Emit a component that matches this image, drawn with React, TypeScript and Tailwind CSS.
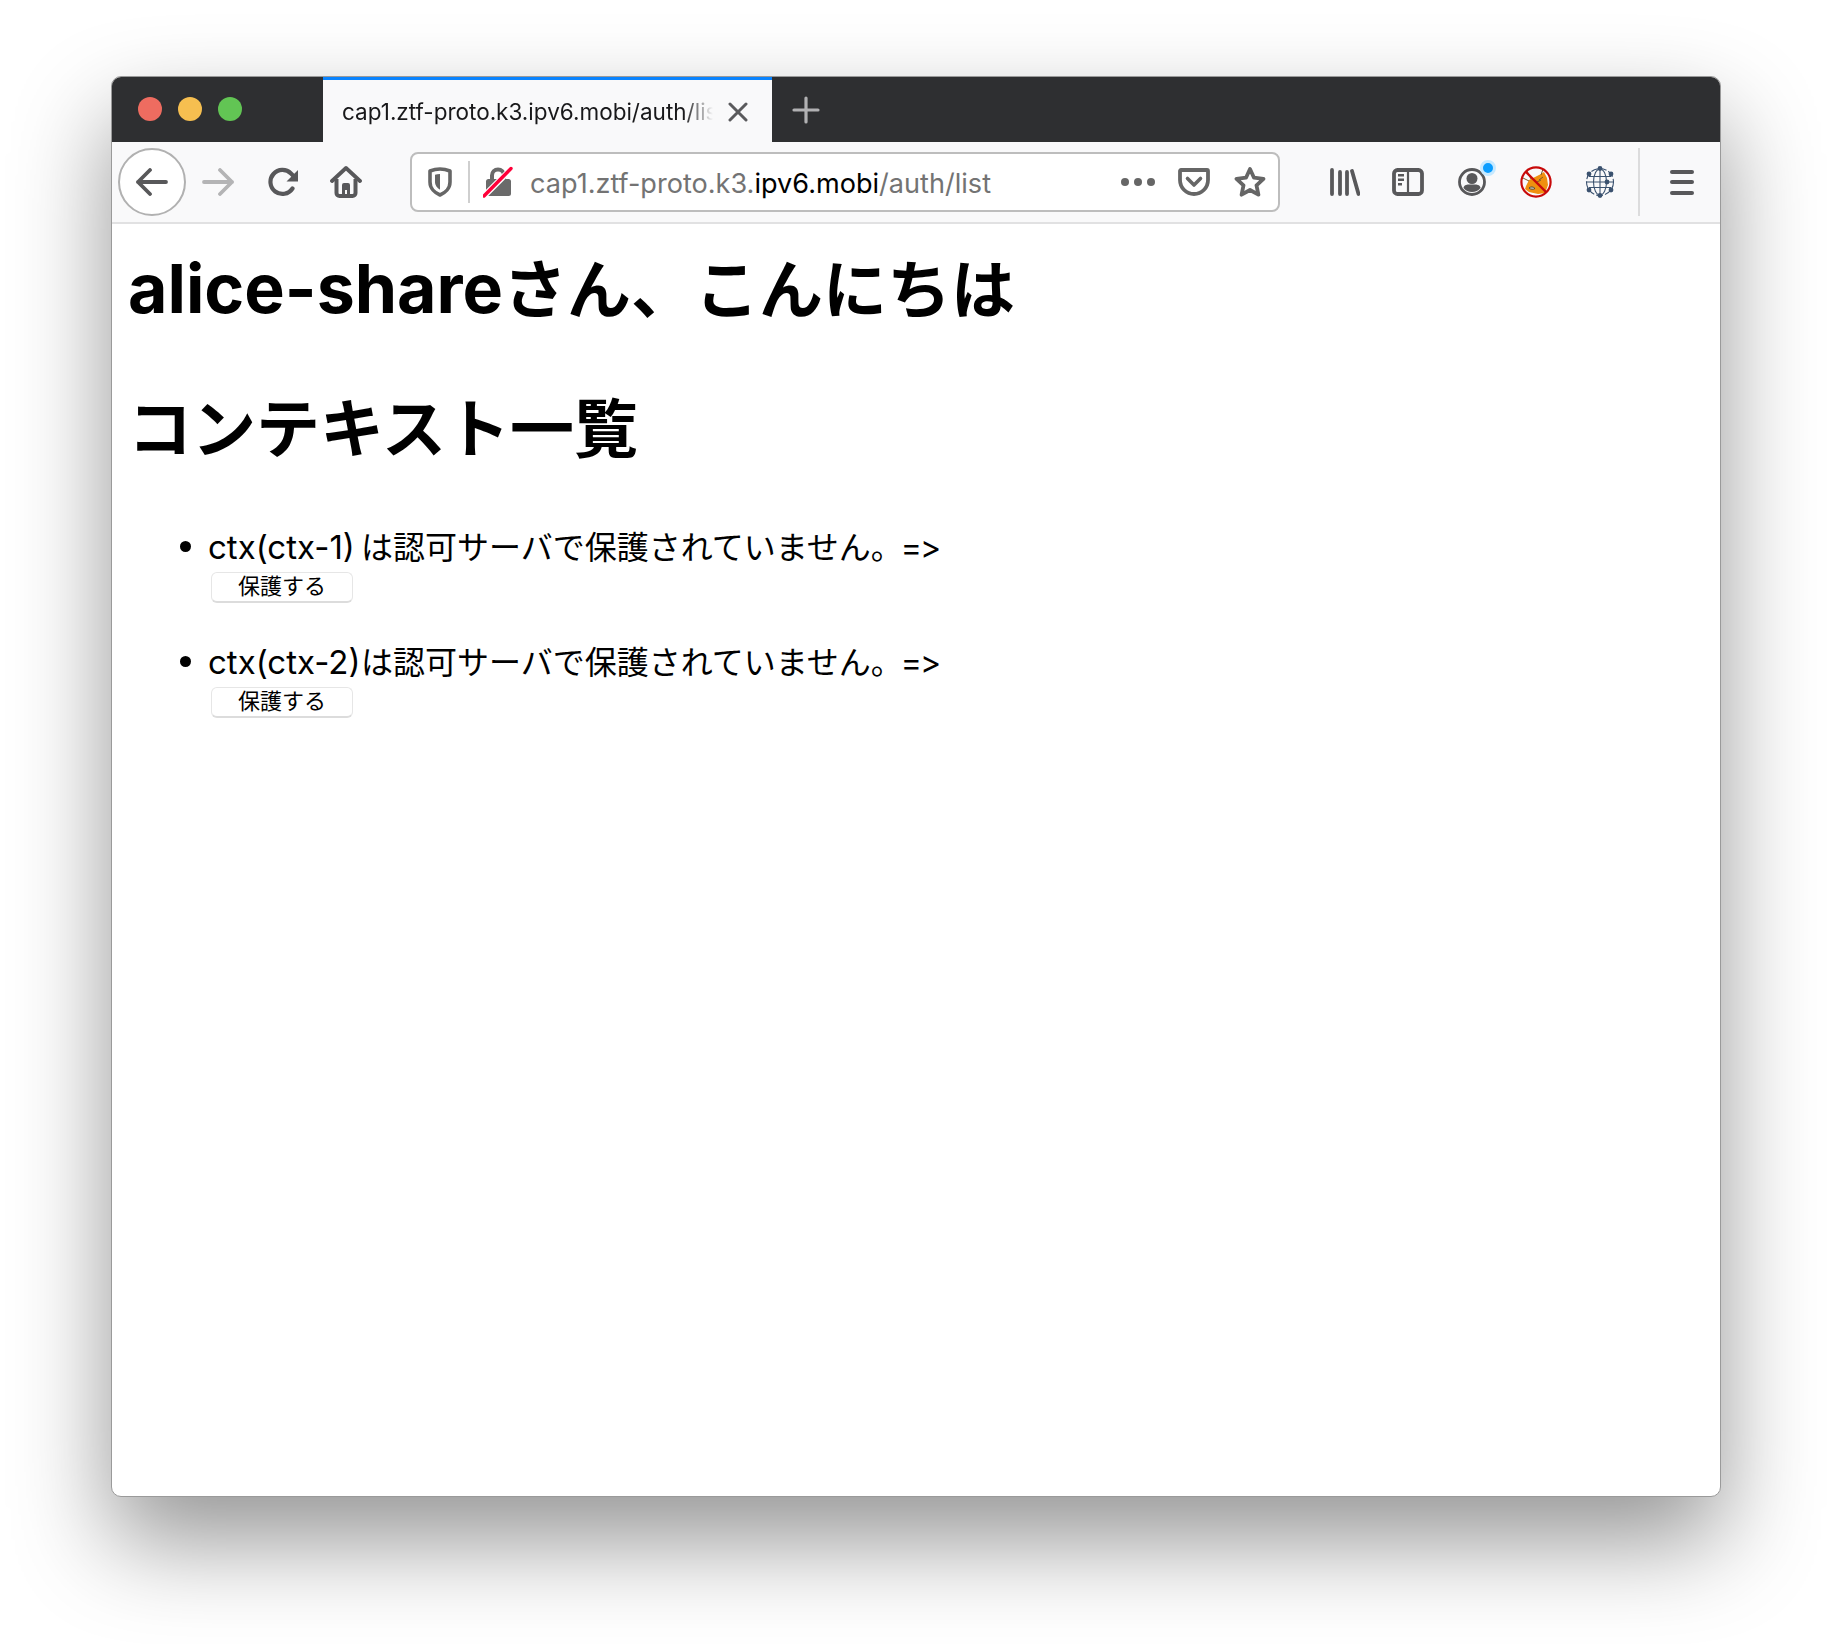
const gray = "#58585a";

function BackIcon({ color }: { color: string }) {
  return (
    <svg width="32" height="28" viewBox="0 0 32 28" fill="none" stroke={color} strokeWidth="3.8" strokeLinecap="round" strokeLinejoin="round">
      <path d="M30 14H2M14 2 2 14l12 12" />
    </svg>
  );
}

function ForwardIcon() {
  return (
    <svg width="32" height="28" viewBox="0 0 32 28" fill="none" stroke="#b4b4b5" strokeWidth="3.8" strokeLinecap="round" strokeLinejoin="round">
      <path d="M2 14h28M18 2l12 12-12 12" />
    </svg>
  );
}

function ReloadIcon() {
  return (
    <svg width="32" height="30" viewBox="0 0 32 30" fill="none">
      <path d="M24.5 21.5A12 12 0 1 1 23 6.500l4 4" stroke={gray} strokeWidth="4.200" strokeLinecap="round" />
      <path d="M30 3v11.500H18.500z" fill={gray} />
    </svg>
  );
}

function HomeIcon() {
  return (
    <svg width="32" height="32" viewBox="0 0 32 32" fill="none">
      <path d="M2 15 16 2l14 13" stroke={gray} strokeWidth="3.800" strokeLinecap="round" strokeLinejoin="round" />
      <path d="M6.500 13v14a3 3 0 0 0 3 3h13a3 3 0 0 0 3-3V13" stroke={gray} strokeWidth="4" />
      <path d="M12 30V19a2 2 0 0 1 2-2h4a2 2 0 0 1 2 2v11h-3v-6h-2v6z" fill={gray} />
    </svg>
  );
}

function ShieldIcon() {
  return (
    <svg width="24" height="30" viewBox="0 0 24 30" fill="none">
      <path d="M12 2C8.500 2 5 2.800 2 4v11c0 6.500 5 11 10 13 5-2 10-6.500 10-13V4c-3-1.200-6.500-2-10-2z" stroke="#666" strokeWidth="3.600" strokeLinejoin="round" />
      <path d="M12 7c-1.800 0-3.500.3-5 .8V15c0 3.500 2.500 6.300 5 7.700z" fill="#666" />
    </svg>
  );
}

function LockIcon() {
  return (
    <svg width="30" height="32" viewBox="0 0 30 32" fill="none">
      <path d="M9 14V9.500a6 6 0 0 1 12 0V14" stroke="#6a6a6a" strokeWidth="4" />
      <rect x="3" y="13" width="25" height="17" rx="2.500" fill="#6a6a6a" />
      <path d="M0 31 28 3" stroke="#fff" strokeWidth="6" />
      <path d="M1 30 28 2.500" stroke="#ff0039" strokeWidth="3.400" strokeLinecap="round" />
    </svg>
  );
}

function PocketIcon() {
  return (
    <svg width="32" height="28" viewBox="0 0 32 28" fill="none" stroke="#666" strokeLinecap="round" strokeLinejoin="round">
      <path d="M3 2h26a1 1 0 0 1 1 1v9c0 8-6.500 14-14 14S2 20 2 12V3a1 1 0 0 1 1-1z" strokeWidth="3.800" />
      <path d="m9.500 10.500 6.500 6.500 6.500-6.500" strokeWidth="3.600" />
    </svg>
  );
}

function StarIcon() {
  return (
    <svg width="32" height="32" viewBox="0 0 32 32" fill="none">
      <path d="m16 3 4 8.700 9.500 1.100-7 6.500 1.900 9.400L16 24l-8.400 4.700 1.900-9.400-7-6.500 9.500-1.100z" stroke="#666" strokeWidth="3.800" strokeLinejoin="round" />
    </svg>
  );
}

function LibraryIcon() {
  return (
    <svg width="30" height="28" viewBox="0 0 30 28" fill="none" stroke={gray} strokeWidth="3.800" strokeLinecap="round">
      <path d="M2 2v24M10 4v22M17 4v22M22 3l6.500 23" />
    </svg>
  );
}

function SidebarIcon() {
  return (
    <svg width="32" height="28" viewBox="0 0 32 28" fill="none">
      <rect x="2" y="2" width="28" height="24" rx="3.500" stroke={gray} strokeWidth="3.800" />
      <path d="M16 2v24" stroke={gray} strokeWidth="2.200" />
      <path d="M6 6h6v2.400H6zM6 10.500h6v2.400H6zM6 15h4v2.400H6z" fill={gray} />
    </svg>
  );
}

function AccountIcon() {
  return (
    <svg width="28" height="28" viewBox="0 0 28 28" fill="none">
      <circle cx="14" cy="14" r="12.500" stroke={gray} strokeWidth="2.800" />
      <circle cx="14" cy="10.500" r="5.500" fill={gray} />
      <path d="M5.500 20c0-2.500 3-3.500 5-3.500h7c2 0 5 1 5 3.500-2 2.500-5 4-8.500 4s-6.500-1.500-8.500-4z" fill={gray} />
    </svg>
  );
}

function NoFoxIcon() {
  return (
    <svg width="32" height="32" viewBox="0 0 32 32" fill="none">
      <path d="M6 20 9 14l6-3 6-3 3-2 3 6 1 7-3 8-7 1-9-2-4-3z" fill="#f0900f" />
      <path d="m7 5 4 8M3 12l6 3M23 3l-2 6M19 14l4-3M17 16l4-2" stroke="#7a5a2a" strokeWidth="1" />
      <path d="M9 22c2-1.500 4-1.500 6 .5-2 1-4 1-6-.5z" fill="#f4e4c8" stroke="#444" strokeWidth="1" />
      <circle cx="16" cy="16" r="14.600" stroke="#c80a0a" strokeWidth="2.200" />
      <path d="M6 6l20 20" stroke="#c80a0a" strokeWidth="2.400" />
    </svg>
  );
}

function GlobeIcon() {
  const nodes = [[15, 2.500], [4, 8], [26, 8], [22, 16], [4, 24], [26, 24], [15, 29.500]];
  return (
    <svg width="30" height="32" viewBox="0 0 30 32" fill="none" stroke="#3b526f" strokeWidth="1.100">
      <circle cx="15" cy="16" r="13.500" strokeDasharray="7 2" />
      <ellipse cx="15" cy="16" rx="6.500" ry="13" />
      <path d="M15 3v26M4 10.500h22M1.500 16h27M4 21.500h22" />
      {nodes.map(([cx, cy]) => (
        <circle key={`${cx}-${cy}`} cx={cx} cy={cy} r="2.400" fill="#3b526f" stroke="none" />
      ))}
    </svg>
  );
}

function ListItem({ name }: { name: string }) {
  return (
    <li className="relative mb-[37px]">
      <span className="absolute -left-[28px] top-[12px] h-[11px] w-[11px] rounded-full bg-black" />
      <span className="inline-block w-[153px] whitespace-nowrap font-['Inter',sans-serif] text-[33px]">{name}</span>
      は認可サーバで保護されていません。
      <span className="-ml-[2px] font-['Inter',sans-serif] text-[32px] tracking-[-2px]">=&gt;</span>
      <div className="flex h-[40px] items-center">
        <button className="ml-[3px] flex h-[31px] w-[142px] items-center justify-center rounded-[6px] border border-[#e6e6e6] border-b-2 border-b-[#dcdcdc] bg-white text-[22px] leading-none text-black">
          保護する
        </button>
      </div>
    </li>
  );
}

export default function App() {
  return (
    <div className="h-[1644px] w-[1832px] overflow-hidden bg-white pl-[111px] pt-[76px] font-['Liberation_Sans','Noto_Sans_CJK_JP',sans-serif] text-black">
      <div className="flex h-[1421px] w-[1610px] flex-col overflow-hidden rounded-[10px] border border-[#9a9a9a] bg-white shadow-[0_44px_96px_rgba(0,0,0,0.42)]">
        <div className="flex h-[65px] shrink-0 bg-[#2e2f31]">
          <div className="ml-[26px] flex w-[185px] items-center gap-[16px] pb-[1px]">
            <span className="h-[24px] w-[24px] rounded-full bg-[#ee6c60]" />
            <span className="h-[24px] w-[24px] rounded-full bg-[#f6bf50]" />
            <span className="h-[24px] w-[24px] rounded-full bg-[#62c554]" />
          </div>
          <div className="flex w-[449px] items-center border-t-[3px] border-[#0a84ff] bg-[#f9f9fa] pl-[19px] pt-[1px] font-['Inter',sans-serif]">
            <span className="w-[371px] overflow-hidden whitespace-nowrap text-[22.5px] text-[#18181a] [mask-image:linear-gradient(to_right,black_92%,transparent)]">
              cap1.ztf-proto.k3.ipv6.mobi/auth/lis
            </span>
            <svg className="ml-[15px]" width="20" height="20" viewBox="0 0 20 20" fill="none" stroke="#5a5a5c" strokeWidth="3" strokeLinecap="round">
              <path d="m2 2 16 16M18 2 2 18" />
            </svg>
          </div>
          <div className="flex items-center pl-[20px]">
            <svg width="28" height="28" viewBox="0 0 28 28" fill="none" stroke="#b1b1b3" strokeWidth="3.200" strokeLinecap="round">
              <path d="M14 2v24M2 14h24" />
            </svg>
          </div>
        </div>

        <div className="flex h-[82px] shrink-0 items-center border-b-2 border-[#e1e1e2] bg-[#f9f9fa]">
          <div className="ml-[6px] flex h-[68px] w-[68px] items-center justify-center rounded-full border-2 border-[#b1b1b1] bg-white">
            <BackIcon color={gray} />
          </div>
          <div className="ml-[16px] flex"><ForwardIcon /></div>
          <div className="ml-[34px] flex"><ReloadIcon /></div>
          <div className="ml-[30px] flex"><HomeIcon /></div>

          <div className="ml-[48px] flex h-[60px] w-[870px] items-center rounded-[8px] border-2 border-[#bdbdbd] bg-white">
            <div className="ml-[16px] flex"><ShieldIcon /></div>
            <div className="ml-[16px] h-[42px] w-[2px] bg-[#cfcfcf]" />
            <div className="ml-[13px] flex"><LockIcon /></div>
            <div className="ml-[17px] whitespace-nowrap pt-[4px] font-['Inter',sans-serif] text-[27.1px] text-[#737373]">
              cap1.ztf-proto.k3.<span className="text-black">ipv6.mobi</span>/auth/list
            </div>
            <div className="ml-auto mr-[-1px] flex gap-[5px]">
              <span className="h-[8px] w-[8px] rounded-full bg-[#666]" />
              <span className="h-[8px] w-[8px] rounded-full bg-[#666]" />
              <span className="h-[8px] w-[8px] rounded-full bg-[#666]" />
            </div>
            <div className="ml-[24px] flex"><PocketIcon /></div>
            <div className="ml-[24px] mr-[12px] flex"><StarIcon /></div>
          </div>

          <div className="ml-[50px] flex"><LibraryIcon /></div>
          <div className="ml-[32px] flex"><SidebarIcon /></div>
          <div className="relative ml-[34px] flex">
            <AccountIcon />
            <span className="absolute -right-[10px] -top-[8px] h-[16px] w-[16px] rounded-full border-[3px] border-[#c6e9ff] bg-[#0a9dff]" />
          </div>
          <div className="ml-[34px] flex"><NoFoxIcon /></div>
          <div className="ml-[33px] flex"><GlobeIcon /></div>
          <div className="ml-[23px] h-[68px] w-[2px] bg-[#dcdcdd]" />
          <div className="ml-[30px] flex flex-col gap-[6.500px]">
            <span className="h-[4px] w-[24px] rounded-full bg-[#58585a]" />
            <span className="h-[4px] w-[24px] rounded-full bg-[#58585a]" />
            <span className="h-[4px] w-[24px] rounded-full bg-[#58585a]" />
          </div>
        </div>

        <main className="px-[16px] pt-[27px]">
          <h1 className="text-[64px] font-bold leading-[74px]">
            <span className="font-['Inter',sans-serif] text-[68px]">alice-share</span>さん、こんにちは
          </h1>
          <h2 className="mt-[65px] text-[64px] font-bold leading-[74px]">コンテキスト一覧</h2>
          <ul className="mt-[62px] list-none pl-[80px] text-[32px] leading-[37px]">
            <ListItem name="ctx(ctx-1)" />
            <ListItem name="ctx(ctx-2)" />
          </ul>
        </main>
      </div>
    </div>
  );
}
